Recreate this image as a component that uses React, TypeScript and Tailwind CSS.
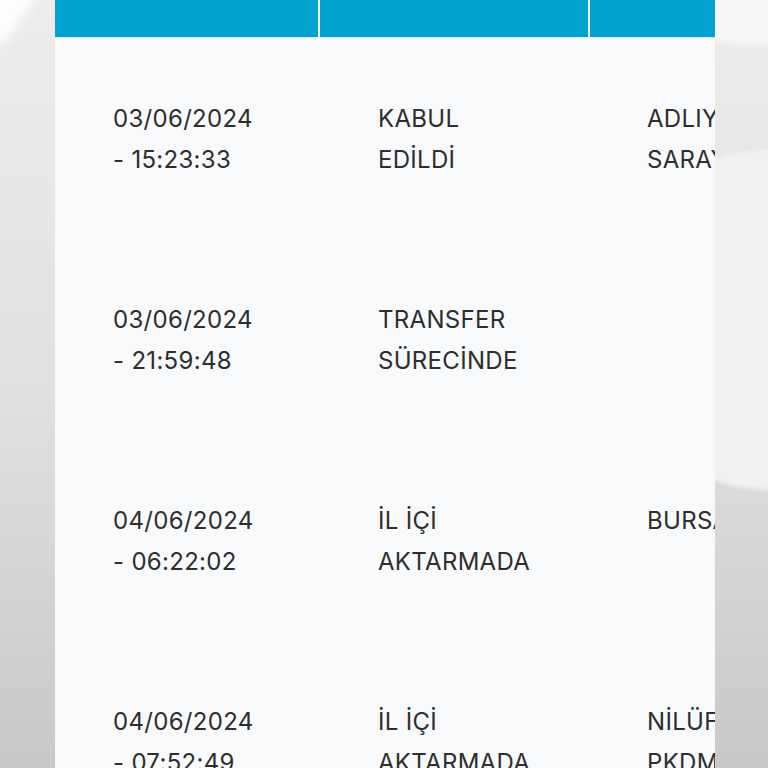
import React from 'react';

const rows = [
  { date: '03/06/2024', time: '- 15:23:33', status: ['KABUL', 'EDİLDİ'], place: ['ADLIYE', 'SARAYI'] },
  { date: '03/06/2024', time: '- 21:59:48', status: ['TRANSFER', 'SÜRECİNDE'], place: [] },
  { date: '04/06/2024', time: '- 06:22:02', status: ['İL İÇİ', 'AKTARMADA'], place: ['BURSA'] },
  { date: '04/06/2024', time: '- 07:52:49', status: ['İL İÇİ', 'AKTARMADA'], place: ['NİLÜFER', 'PKDM'] },
];

const Cell: React.FC<{ lines: string[]; last?: boolean }> = ({ lines, last }) => (
  <div className={`pt-[60px] pb-[58px] ${last ? 'pl-[57px]' : 'px-[58px]'} leading-[41px] whitespace-nowrap`}>
    {lines.map((l, i) => (
      <div key={i}>{l}</div>
    ))}
  </div>
);

const App: React.FC = () => {
  return (
    <div className="relative w-[768px] h-[768px] overflow-hidden bg-gradient-to-b from-[#ececec] via-[#e1e1e1] to-[#c8c8c8]">
      {/* blurred background shapes */}
      <div className="absolute -left-[70px] -top-[110px] w-[110px] h-[170px] rotate-[35deg] rounded-full bg-white/90 blur-[5px]" />
      <div className="absolute left-[640px] -top-[165px] w-[260px] h-[210px] rounded-full bg-[#f6f6f6] blur-[3px]" />
      <div className="absolute left-[600px] top-[150px] w-[340px] h-[340px] rounded-full bg-[#f1f1f1] blur-[2px]" />

      <div
        className="relative ml-[55px] w-[660px] h-[768px] overflow-hidden bg-[#f7f9fb] text-[24px] tracking-[0.3px] text-[#2e2e2e]"
        style={{ fontFamily: 'Inter, "Liberation Sans", sans-serif' }}
      >
        <div className="grid grid-cols-[263px_268px_263px] gap-x-[2px] border-b border-[#d9f0f7]">
          <div className="h-[37px] bg-[#00a4cf]" />
          <div className="h-[37px] bg-[#00a4cf]" />
          <div className="h-[37px] bg-[#00a4cf]" />
        </div>
        {rows.map((r, i) => (
          <div key={i} className="grid grid-cols-[263px_268px_263px] gap-x-[2px] border-b border-transparent">
            <Cell lines={[r.date, r.time]} />
            <Cell lines={r.status} />
            <Cell lines={r.place.length ? r.place : ['\u00a0']} last />
          </div>
        ))}
      </div>
    </div>
  );
};

export default App;
